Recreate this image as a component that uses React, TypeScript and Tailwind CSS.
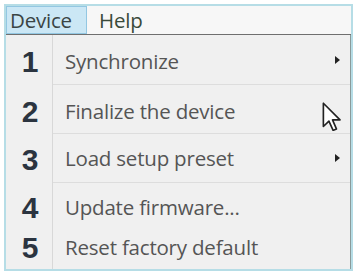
import React from "react";

const Arrow = () => (
  <svg width="7" height="10" viewBox="0 0 7 10" className="absolute right-[9px] top-1/2 -translate-y-1/2">
    <path d="M1 1 L6 5 L1 9 Z" fill="#222" />
  </svg>
);

const Cursor = () => (
  <svg width="22" height="30" viewBox="-1 -1 14.5 20" className="absolute left-[321px] top-[101px]">
    <path
      d="M0.5 0.5 L0.5 16 L4.2 12.4 L7 18.6 L9.2 17.6 L6.6 11.6 L11.6 11.6 Z"
      fill="white"
      stroke="#222"
      strokeWidth="1.1"
      strokeLinejoin="round"
    />
  </svg>
);

type Row = { n: string; label: string; h: string; pad: string; arrow?: boolean; sep?: boolean };

const rows: Row[] = [
  { n: "1", label: "Synchronize", h: "h-[50px]", pad: "pt-[3px]", arrow: true, sep: true },
  { n: "2", label: "Finalize the device", h: "h-[49px]", pad: "pt-[4px]", sep: true },
  { n: "3", label: "Load setup preset", h: "h-[49px]", pad: "pt-[1px]", arrow: true, sep: true },
  { n: "4", label: "Update firmware...", h: "h-[46px]", pad: "pt-[3px]" },
  { n: "5", label: "Reset factory default", h: "h-[39px]", pad: "pb-[3px]" },
];

export default function App() {
  return (
    <div className="w-[356px] h-[275px] bg-white pt-[4px] pl-[4px] relative" style={{ fontFamily: '"Open Sans", "Noto Sans", sans-serif' }}>
      <div className="w-[349px] h-[267px] border-2 border-[#b6dde6] flex flex-col bg-[#f0f0f0]">
        <div className="h-[29px] flex items-stretch bg-[#f7f7f7] border-b border-[#6f6f6f] shrink-0">
          <div className="w-[81px] bg-[#cbe7f5] border border-[#93c7e2] flex items-center pl-[3px] text-[20.5px] tracking-[-0.2px] text-[#3a4444]">
            Device
          </div>
          <div className="flex items-center pl-[12px] text-[20.5px] tracking-[-0.2px] text-[#3a4a3a]">Help</div>
        </div>
        <div className="flex-1 flex border-r border-[#8a9a9a]">
          <div className="w-[47px] border-r border-[#d8d8d8] flex flex-col">
            {rows.map((r) => (
              <div
                key={r.n}
                className={`${r.h} ${r.pad} flex items-center justify-center pl-[2px] text-[30px] font-bold text-[#2b3440]`}
                style={{ fontFamily: '"Liberation Sans", Arial, sans-serif' }}
              >
                {r.n}
              </div>
            ))}
          </div>
          <div className="flex-1 flex flex-col">
            {rows.map((r) => (
              <div
                key={r.n}
                className={`${r.h} ${r.pad} relative flex items-center pl-[12px] text-[20.5px] tracking-[-0.2px] text-[#555555] ${r.sep ? "border-b border-[#dddddd]" : ""}`}
              >
                {r.label}
                {r.arrow ? <Arrow /> : null}
              </div>
            ))}
          </div>
        </div>
      </div>
      <Cursor />
    </div>
  );
}
